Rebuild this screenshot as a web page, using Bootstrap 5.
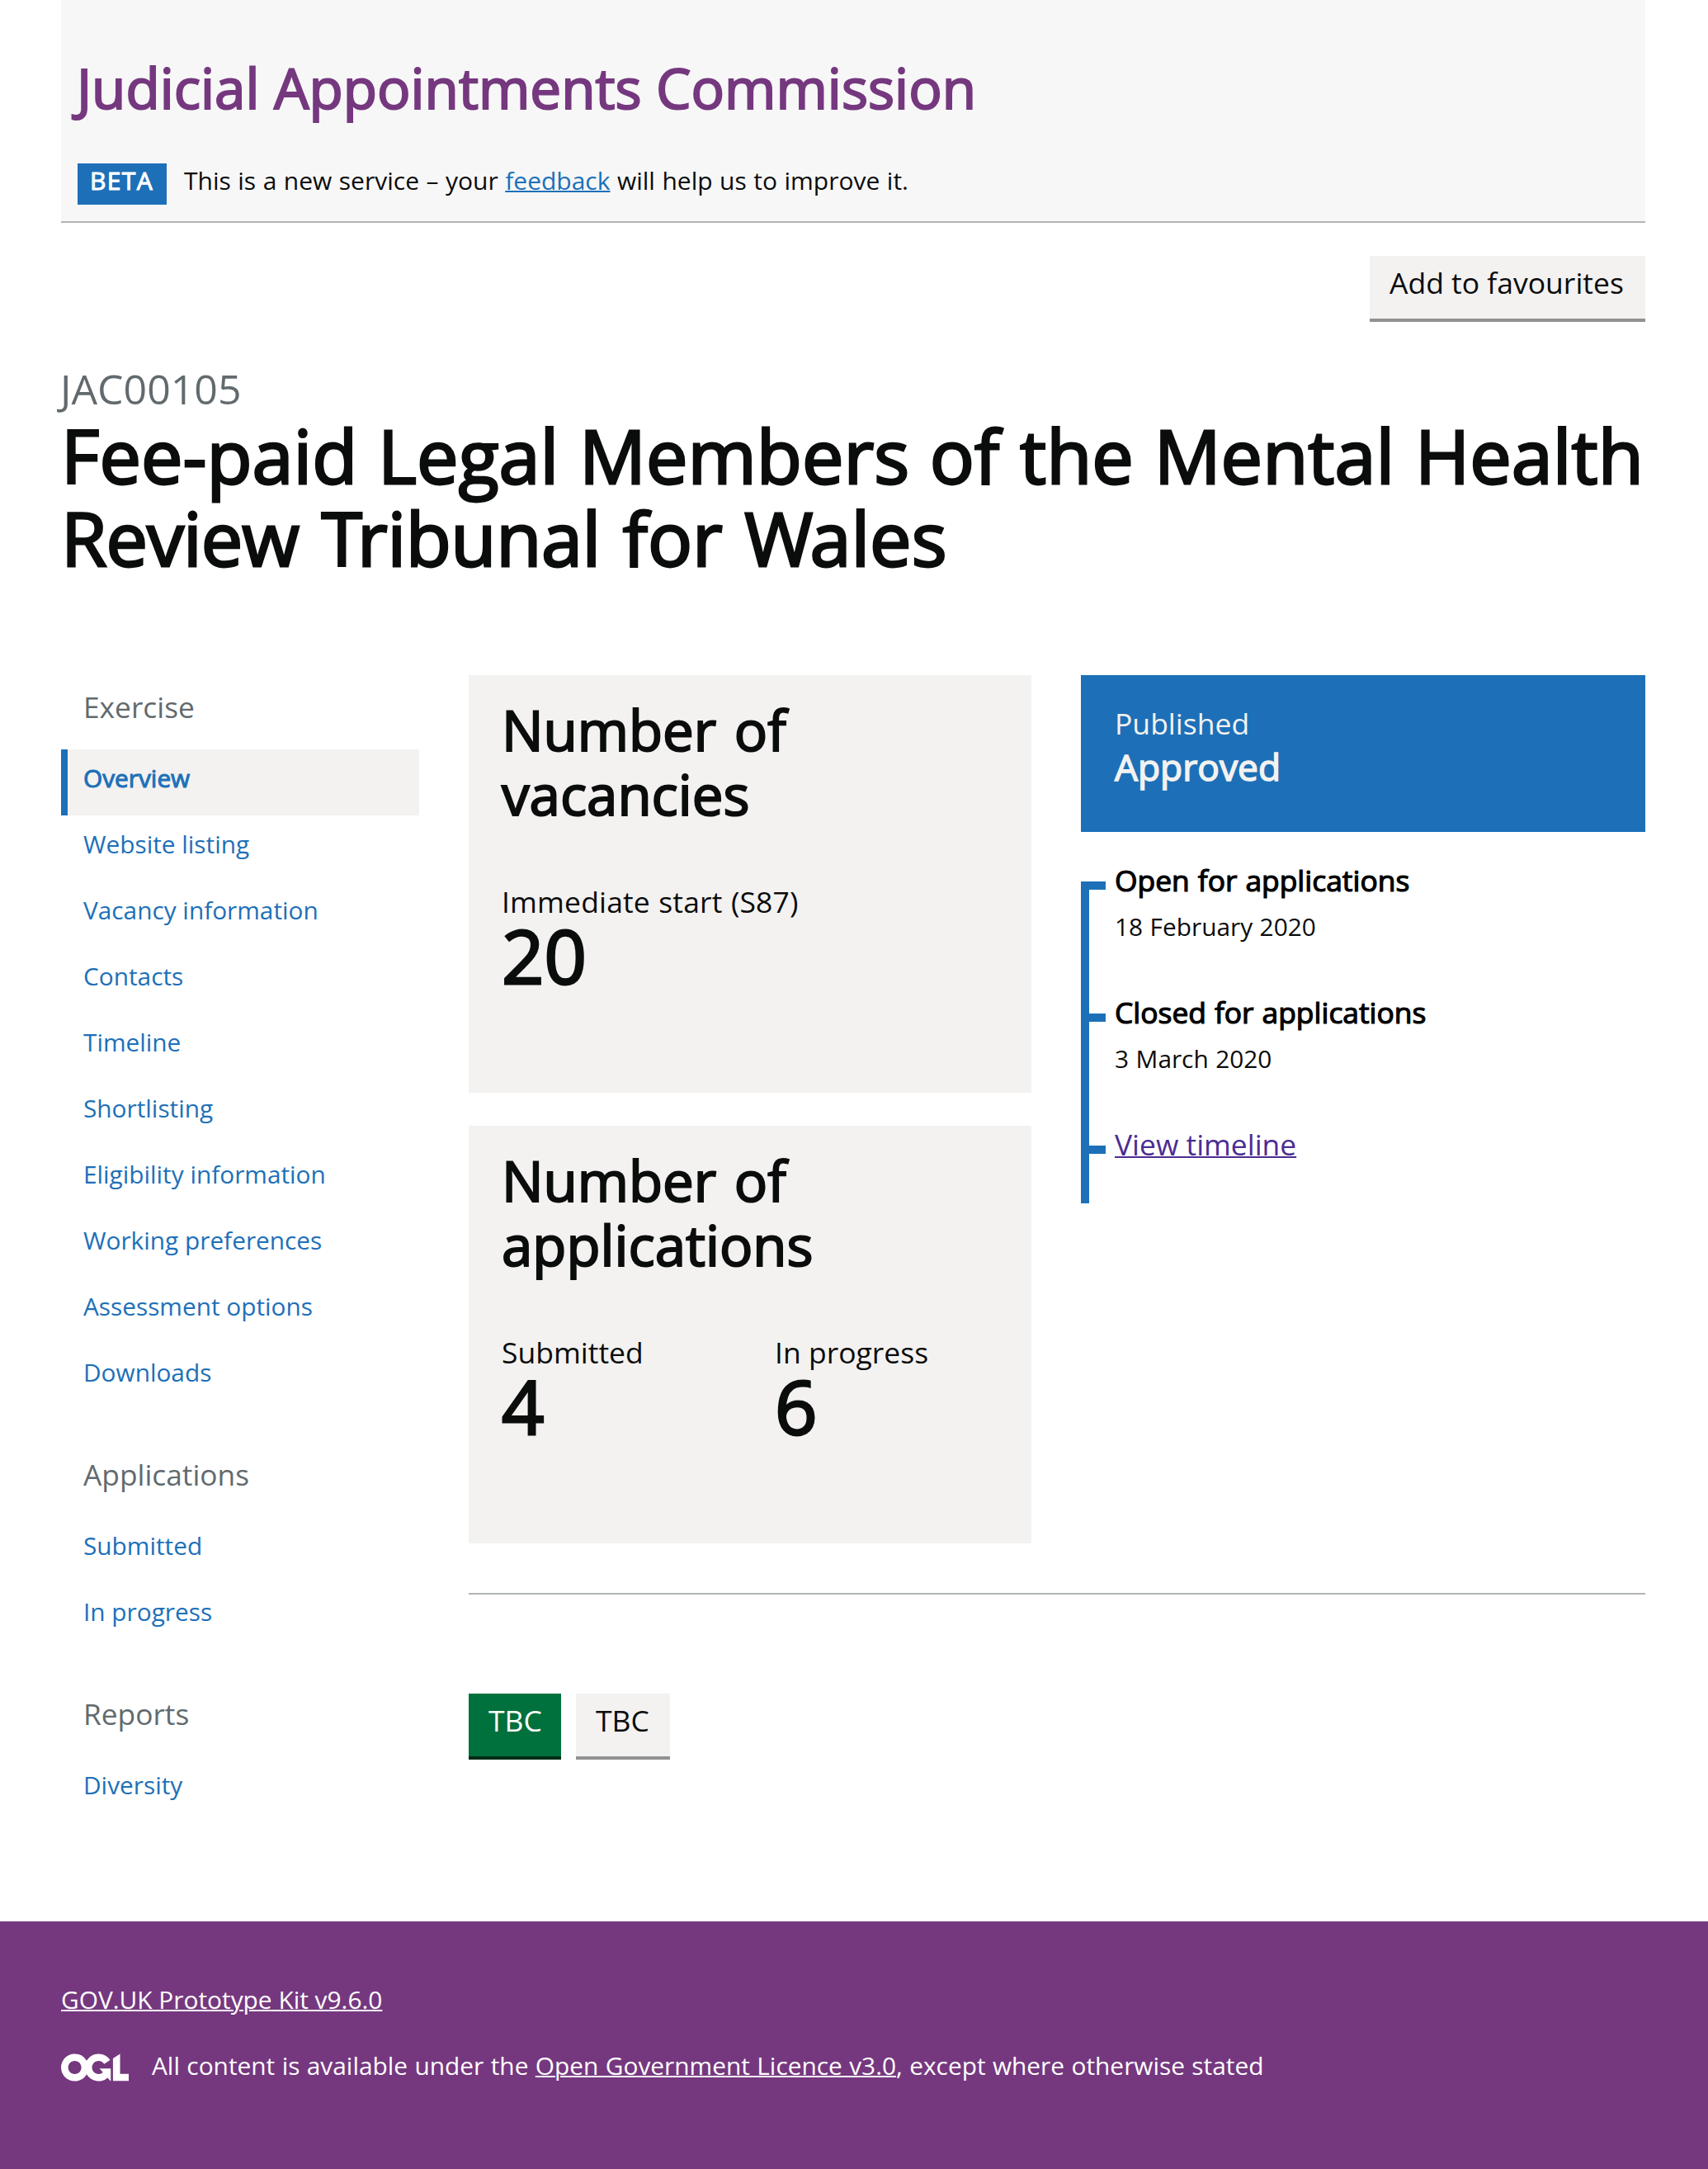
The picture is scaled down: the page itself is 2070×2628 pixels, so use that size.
<!DOCTYPE html>
<html lang="en">
<head>
<meta charset="utf-8">
<meta name="viewport" content="width=device-width, initial-scale=1">
<title>Judicial Appointments Commission</title>
<link href="https://cdn.jsdelivr.net/npm/bootstrap@5.3.0/dist/css/bootstrap.min.css" rel="stylesheet">
<style>
  :root { --jac-blue:#1d70b8; --jac-purple:#75387f; --jac-ink:#0b0c0c; --jac-grey:#f3f2f1; --jac-muted:#626a6e; --jac-rule:#b1b4b6; }
  body { font-family:"Open Sans",sans-serif; font-size:30px; line-height:50px; color:var(--jac-ink); background:#fff; }
  a { color:var(--jac-blue); text-decoration-thickness:2px; }
  h1,h2,h3,p,ul { margin:0; padding:0; }
  h1,h2,h3 { font-weight:400; }
  .page-width { margin:0 76px 0 74px; }
  .emph { -webkit-text-stroke:.034em currentColor; }

  .masthead { height:270px; padding:71px 20px 0 19px; background:#f7f7f7; border-bottom:2px solid var(--jac-rule); }
  .masthead-name { font-size:67.4px; line-height:70px; color:var(--jac-purple); -webkit-text-stroke-width:.031em; }
  .phase { margin:53px 0 0 1px; gap:21px; word-spacing:.7px; }
  .phase-tag { width:108px; height:50px; margin-top:4px; padding:0 0 10px 15px; background:var(--jac-blue); color:#fff; line-height:41px; letter-spacing:1.4px; }

  .topbar { margin-top:40px; }
  .gov-btn { height:80px; padding:0 0 12px 24px; border:0; border-bottom:4px solid #929191; border-radius:0; background:var(--jac-grey); color:var(--jac-ink); font-size:35.5px; line-height:64px; text-align:left; }
  .gov-btn-wide { width:334px; }
  .gov-btn-short { width:114px; }
  .gov-btn-go { width:112px; background:#00703c; border-bottom-color:#002d18; color:#fff; }

  .caption-xl { margin:51px 0 0 -1px; font-size:50px; line-height:60px; color:var(--jac-muted); }
  .title-xl { font-size:90px; line-height:100px; word-spacing:1.4px; -webkit-text-stroke-width:.031em; }
  .title-end { word-spacing:3px; }
  .k1 { letter-spacing:-1px; } .k2 { letter-spacing:-6px; } .k3 { letter-spacing:-.4px; } .k4 { letter-spacing:-4px; }

  .columns { margin-top:117px; gap:60px; }
  .side { width:434px; }
  .side h2 { height:90px; padding-left:27px; font-size:35.3px; line-height:77px; color:var(--jac-muted); }
  .side ul + h2 { margin-top:40px; }
  .side a { display:block; height:80px; padding:0 0 10px 19px; border-left:8px solid transparent; font-size:29.8px; line-height:70px; text-decoration:none; }
  .side a.current { border-left-color:var(--jac-blue); background:var(--jac-grey); }

  .overview { gap:60px; }
  .tiles { width:682px; }
  .tile { height:506px; padding:27px 40px 0; background:var(--jac-grey); }
  .tile + .tile { margin-top:40px; }
  .tile h2 { width:440px; margin-bottom:74px; font-size:67.2px; line-height:78px; word-spacing:4px; -webkit-text-stroke-width:.031em; }
  .tile .row { --bs-gutter-x:60px; }
  .stat-label { font-size:35.5px; line-height:34px; white-space:nowrap; }
  .stat-label-long { letter-spacing:.15px; word-spacing:1px; }
  .stat-value { font-size:90px; line-height:97px; -webkit-text-stroke-width:.031em; }

  .status { height:190px; padding:33px 40px 0 41px; background:var(--jac-blue); color:var(--jac-grey); }
  .status p:first-child { font-size:35.5px; }
  .status p:last-child { font-size:44.3px; line-height:56px; }
  .steps { margin-top:33px; }
  .steps li { position:relative; height:160px; padding-left:41px; }
  .steps li::before { content:""; position:absolute; left:0; top:27px; width:30px; height:160px; border:solid var(--jac-blue); border-width:10px 0 0 10px; }
  .steps li:last-child { height:97px; }
  .steps li:last-child::before { height:70px; }
  .steps h3, .steps a { font-size:35.4px; line-height:50px; }
  .steps h3 { color:#000; word-spacing:.8px; }
  .steps a { color:#4c2c92; }
  .steps p { margin-top:7px; font-size:29.8px; word-spacing:.8px; }

  .divider { margin:60px 0 120px; height:2px; background:var(--jac-rule); }
  .actions { gap:18px; }

  .foot { height:300px; margin-top:120px; padding-top:70px; background:var(--jac-purple); color:#fff; font-size:29.85px; }
  .foot a { color:#fff; }
  .licence { margin-top:30px; gap:28px; word-spacing:.65px; }
  .ogl { margin-top:3px; }
</style>
</head>
<body>
<header class="page-width masthead">
  <p class="masthead-name emph">Judicial Appointments Commission</p>
  <div class="phase d-flex align-items-start">
    <strong class="phase-tag emph fw-normal">BETA</strong>
    <span>This is a new service – your <a href="#">feedback</a> will help us to improve it.</span>
  </div>
</header>

<main class="page-width">
  <div class="topbar d-flex justify-content-end">
    <button class="btn gov-btn gov-btn-wide" type="button">Add to favourites</button>
  </div>
  <p class="caption-xl">JAC00105</p>
  <h1 class="title-xl emph">Fee-paid Legal Members of the Mental Health <span class="title-end"><span class="k1">Revie</span>w <span class="k2">T</span><span class="k3">ribuna</span>l for <span class="k4">W</span>ales</span></h1>

  <div class="columns d-flex">
    <nav class="side flex-shrink-0" aria-label="Exercise">
      <h2>Exercise</h2>
      <ul class="list-unstyled">
        <li><a class="current emph" href="#">Overview</a></li>
        <li><a href="#">Website listing</a></li>
        <li><a href="#">Vacancy information</a></li>
        <li><a href="#">Contacts</a></li>
        <li><a href="#">Timeline</a></li>
        <li><a href="#">Shortlisting</a></li>
        <li><a href="#">Eligibility information</a></li>
        <li><a href="#">Working preferences</a></li>
        <li><a href="#">Assessment options</a></li>
        <li><a href="#">Downloads</a></li>
      </ul>
      <h2>Applications</h2>
      <ul class="list-unstyled">
        <li><a href="#">Submitted</a></li>
        <li><a href="#">In progress</a></li>
      </ul>
      <h2>Reports</h2>
      <ul class="list-unstyled">
        <li><a href="#">Diversity</a></li>
      </ul>
    </nav>

    <div class="flex-grow-1">
      <div class="overview d-flex">
        <div class="tiles flex-shrink-0">
          <section class="tile">
            <h2 class="emph">Number of vacancies</h2>
            <p class="stat-label stat-label-long">Immediate start (S87)</p>
            <p class="stat-value emph">20</p>
          </section>
          <section class="tile">
            <h2 class="emph">Number of applications</h2>
            <div class="row">
              <div class="col-6">
                <p class="stat-label">Submitted</p>
                <p class="stat-value emph">4</p>
              </div>
              <div class="col-6">
                <p class="stat-label">In progress</p>
                <p class="stat-value emph">6</p>
              </div>
            </div>
          </section>
        </div>
        <aside class="flex-grow-1">
          <div class="status">
            <p>Published</p>
            <p class="emph">Approved</p>
          </div>
          <ul class="steps list-unstyled">
            <li><h3 class="emph">Open for applications</h3><p>18 February 2020</p></li>
            <li><h3 class="emph">Closed for applications</h3><p>3 March 2020</p></li>
            <li><a href="#">View timeline</a></li>
          </ul>
        </aside>
      </div>
      <div class="divider"></div>
      <div class="actions d-flex">
        <button class="btn gov-btn gov-btn-go" type="button">TBC</button>
        <button class="btn gov-btn gov-btn-short" type="button">TBC</button>
      </div>
    </div>
  </div>
</main>

<footer class="foot">
  <div class="page-width">
    <p><a href="#">GOV.UK Prototype Kit v9.6.0</a></p>
    <div class="licence d-flex align-items-center">
      <svg class="ogl" width="82" height="34" viewBox="0 0 483.2 195.7" role="img" aria-label="OGL"><path fill="currentColor" d="M421.5 142.8V.1l-50.7 32.3v161.1h112.4v-50.7zm-122.3-9.6A47.12 47.12 0 0 1 221 97.8c0-26 21.1-47.1 47.1-47.1 16.7 0 31.4 8.7 39.7 21.8l42.7-27.2A97.63 97.63 0 0 0 268.1 0c-36.5 0-68.3 20.1-85.1 49.7A98 98 0 0 0 97.8 0C43.9 0 0 43.9 0 97.8s43.9 97.8 97.8 97.8c36.5 0 68.3-20.1 85.1-49.7a97.76 97.76 0 0 0 149.6 25.4l19.4 22.2h3v-87.8h-80l24.3 27.5zM97.8 145c-26 0-47.1-21.1-47.1-47.1s21.1-47.1 47.1-47.1 47.1 21.1 47.1 47.1S123.8 145 97.8 145"/></svg>
      <span>All content is available under the <a href="#">Open Government Licence v3.0</a>, except where otherwise stated</span>
    </div>
  </div>
</footer>
<script src="https://cdn.jsdelivr.net/npm/bootstrap@5.3.0/dist/js/bootstrap.bundle.min.js"></script>
</body>
</html>
